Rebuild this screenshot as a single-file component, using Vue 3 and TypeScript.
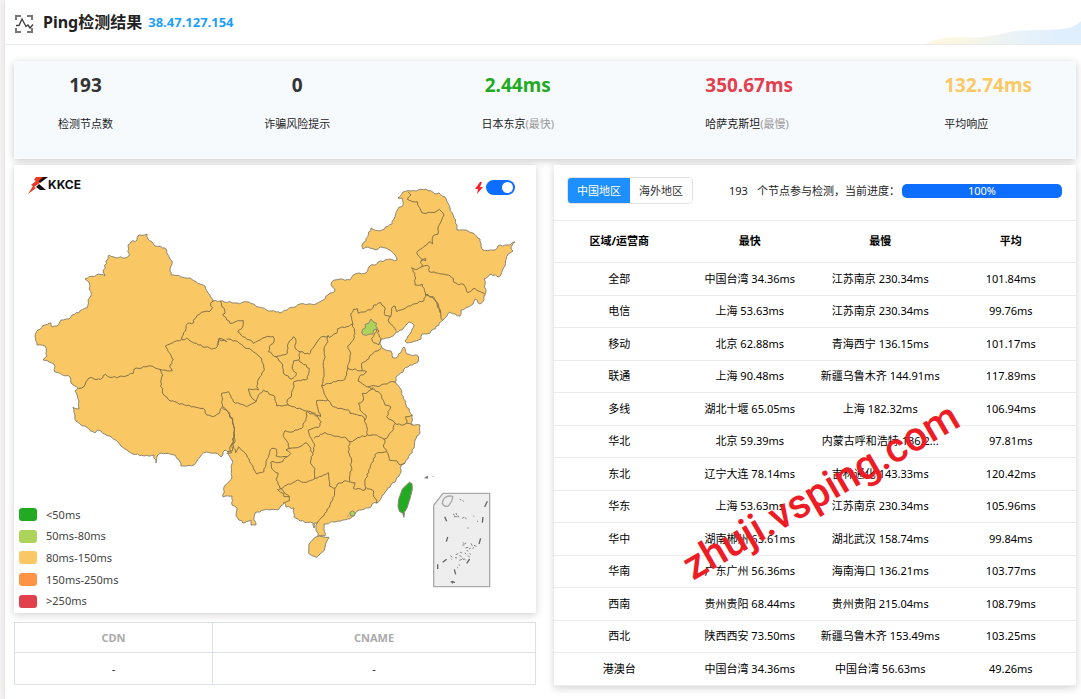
<script setup lang="ts">
import { ref } from 'vue'

type Tone = 'dark' | 'good' | 'bad' | 'fair'
interface Stat { value: string; label: string; note?: string; tone: Tone; start?: boolean }

const stats: Stat[] = [
  { value: '193', label: '检测节点数', tone: 'dark' },
  { value: '0', label: '诈骗风险提示', tone: 'dark' },
  { value: '2.44ms', label: '日本东京', note: '(最快)', tone: 'good' },
  { value: '350.67ms', label: '哈萨克斯坦', note: '(最慢)', tone: 'bad', start: true },
  { value: '132.74ms', label: '平均响应', tone: 'fair', start: true },
]

const legend = [
  { text: '<50ms', cls: 'l1' },
  { text: '50ms-80ms', cls: 'l2' },
  { text: '80ms-150ms', cls: 'l3' },
  { text: '150ms-250ms', cls: 'l4' },
  { text: '>250ms', cls: 'l5' },
]

const rows: string[][] = [
  ['全部', '中国台湾 34.36ms', '江苏南京 230.34ms', '101.84ms'],
  ['电信', '上海 53.63ms', '江苏南京 230.34ms', '99.76ms'],
  ['移动', '北京 62.88ms', '青海西宁 136.15ms', '101.17ms'],
  ['联通', '上海 90.48ms', '新疆乌鲁木齐 144.91ms', '117.89ms'],
  ['多线', '湖北十堰 65.05ms', '上海 182.32ms', '106.94ms'],
  ['华北', '北京 59.39ms', '内蒙古呼和浩特 136.2...', '97.81ms'],
  ['东北', '辽宁大连 78.14ms', '吉林通化 143.33ms', '120.42ms'],
  ['华东', '上海 53.63ms', '江苏南京 230.34ms', '105.96ms'],
  ['华中', '湖南郴州 63.61ms', '湖北武汉 158.74ms', '99.84ms'],
  ['华南', '广东广州 56.36ms', '海南海口 136.21ms', '103.77ms'],
  ['西南', '贵州贵阳 68.44ms', '贵州贵阳 215.04ms', '108.79ms'],
  ['西北', '陕西西安 73.50ms', '新疆乌鲁木齐 153.49ms', '103.25ms'],
  ['港澳台', '中国台湾 34.36ms', '中国台湾 56.63ms', '49.26ms'],
]

const region = ref<'cn' | 'abroad'>('cn')
const fast = ref(true)

/* Turns a coarse point list into a line with small coast-like wiggles. */
function rough(src: string, amount: number, closed = false): string {
  const n = src.trim().split(/[\s,]+/).map(Number)
  const pts: [number, number][] = []
  for (let i = 0; i < n.length; i += 2) pts.push([n[i], n[i + 1]])
  if (closed) pts.push(pts[0])
  const out: string[] = [`${pts[0][0]} ${pts[0][1]}`]
  for (let i = 1; i < pts.length; i++) {
    const [ax, ay] = pts[i - 1]
    const [bx, by] = pts[i]
    const dx = bx - ax
    const dy = by - ay
    const len = Math.hypot(dx, dy)
    const parts = Math.max(1, Math.round(len / (amount * 2.4)))
    for (let k = 1; k < parts; k++) {
      const h = Math.sin((ax + k * 7) * 12.9 + (by + k * 3) * 78.2) * 43758.5
      const off = (h - Math.floor(h) - 0.5) * amount * 1.8
      const t = k / parts
      out.push(`${(ax + dx * t - (dy / len) * off).toFixed(1)} ${(ay + dy * t + (dx / len) * off).toFixed(1)}`)
    }
    out.push(`${bx} ${by}`)
  }
  return 'M' + out.join('L') + (closed ? 'Z' : '')
}

const mainland = rough(`35 336 38 330 45 325 51 323 52 327 57 326 61 320 69 319 72 315 87 308 88 300 91 296 89 282 85 279 99 274 105 276 103 272
109 255 114 257 125 258 129 256 128 245 131 242 137 240 139 235 147 234 148 239 155 246 165 248 168 255 172 261 170 271 171 275 190 278 200 284 205 286
208 293 213 301 220 301 237 303 249 302 258 307 271 311 276 312 280 313 300 304 316 304 323 300 328 295 335 291 331 285 334 280 340 279 350 280 355 274 366 273
370 266 385 260 397 260 395 255 386 248 380 247 376 250 368 247 363 249 362 245 366 241 371 228 380 231 392 224 394 219 398 209 403 205 402 198 398 198
403 192 411 191 426 189 435 194 439 193 445 197 450 208 453 215 457 225 457 230 465 230 473 233 480 239 481 246 483 250 495 250 498 246 507 245 515 242
511 247 513 251 508 254 505 266 499 277 491 274 484 279 486 292 484 300 480 304 475 299 473 304 461 310 460 316 450 312 443 320 430 333 422 334 421 339
407 343 405 341 408 336 414 325 409 322 402 330 396 332 393 336 381 339 380 344 382 348 391 351 393 358 396 358 404 347 407 354 418 356 418 362 410 365 397 376 395 382
400 388 406 405 412 415 412 425 420 425 420 433 415 440 414 448 405 463 400 467 401 472 396 480 385 492 377 503 372 504 369 508 359 510 352 517 343 520
335 522 324 524 325 536 318 536 316 528 317 523 314 523 314 528 313 523 300 521 294 517 294 508 286 507 284 502 278 510 264 510 255 513 254 517 256 525 251 525
251 520 243 523 236 516 237 508 232 505 232 496 223 497 224 487 232 477 232 460 228 452 225 450 221 457 215 453 206 452 200 457 194 465 181 466 179 460
175 455 161 453 157 456 156 463 154 455 144 456 133 454 125 449 118 442 101 431 98 430 95 433 76 421 75 415 73 407 79 409 79 401 75 391 78 388 72 384
70 377 55 372 54 364 43 360 47 356 45 346 37 345`, 1, true)

/* Province borders, grouped by map sheet; every sheet is drawn at a third of its grid. */
const sheets = [
  {
    at: 'translate(10 165) scale(.33333)',
    lines: ['611 408 602 415 607 428 598 440 583 440 568 448 553 462 551 473 533 475 526 498 515 523 466 543'],
  },
  {
    at: 'translate(10 320) scale(.33333)',
    lines: [
      '515 59 530 55 545 65 565 75 605 87 622 80 627 55 650 65',
      '466 78 475 95 490 120 480 135 487 152 450 148',
      '450 148 458 165 452 185 458 220 480 243 530 257 580 265 590 285 607 290 628 280 635 262',
      '205 205 222 200 237 174 272 178 287 163 300 172 340 170 370 160 372 148 400 140 430 140 450 148',
      '635 262 655 275 668 305 675 365 660 380 665 398 650 400',
    ],
  },
  {
    at: 'translate(200 280) scale(.33333)',
    lines: [
      '62 64 75 100 68 103 90 130 113 122 130 122 127 143 113 156 135 172 150 180 160 190 180 180 195 172 220 170 222 185 208 200 205 215 228 230',
      '228 230 262 220 265 190 280 170 288 180 285 205 302 215 296 240 280 243 277 265 290 280 275 297 252 282 248 255 228 230',
      '296 240 328 265 322 297 282 305 275 345 262 360 265 375',
      '302 215 328 223 345 195 362 172 385 168 388 172 410 160 412 147 440 140 458 132 452 105 460 88 472 86 475 100 518 85 522 75 542 68 553 80 556 107 572 110 575 85 585 78 590 95 625 78 672 62 677 43 700 55 712 75 722 100',
      '385 165 380 190 372 210 376 230 370 260 372 290 365 318',
      '365 318 400 305 435 298 443 265',
      '458 132 465 160 460 180 443 198 452 220 443 265 487 272 485 250 500 240 520 220 543 205',
      '487 272 500 275 478 290 474 303 500 320 540 318 575 305 588 308',
      '572 110 565 122 580 140 588 152',
      '530 148 537 152 533 160 543 175 535 195 518 185 515 175 523 162 530 148',
      '80 178 105 182 130 198 160 215 185 235 193 268 180 290 170 320 175 330 145 327 150 345 168 365 175 345 190 330 225 350 230 378 262 375 320 393 350 410',
      '55 195 57 178 80 185',
      '168 365 140 380 120 372 100 365 85 335 65 340 68 380',
      '365 318 383 360 350 362 352 380 362 410 345 400 322 393',
      '383 360 400 380 445 390 450 400 490 410 500 440 502 465',
      '520 322 500 340 487 340 490 360 475 370 480 390 498 405 495 420',
      '505 318 540 340 555 375 572 380 560 410 585 430 575 455 560 475 550 478',
      '585 430 610 435 620 430 637 435',
      '620 430 617 410 638 405',
    ],
  },
  {
    at: 'translate(200 400) scale(.33333)',
    lines: [
      '68 20 98 55 104 105 98 130 107 158 115 140 140 165 152 190 170 222 192 215 198 185 215 145 230 148 228 168 262 170 248 185 212 187 215 205 235 220 228 240 240 265 268 290 268 302 253 308',
      '104 105 96 130 98 152 83 155',
      '235 270 285 245 293 240 310 247 345 235',
      '262 170 272 160 258 150 270 145 300 140 318 128 338 158 332 190 345 205 345 235',
      '320 35 318 55 305 85 280 95 255 92 250 110 265 130 268 145',
      '350 45 364 65 355 82 325 90 330 110 342 130 340 157',
      '342 115 375 97 395 105 440 115 450 125 480 112 502 105 530 105 550 115',
      '550 115 555 125 550 135 560 155 530 160 520 175 510 205 497 235 497 262 518 270 530 310',
      '450 125 445 155 455 180 450 245',
      '345 235 385 218 388 258 405 265 412 252 440 243 465 248 460 265 495 270 497 262',
      '560 155 570 182 590 182 600 195 615 190',
      '405 265 398 300 380 335 352 370',
      '232 268 250 280 252 290 268 290',
    ],
  },
  {
    at: 'translate(340 170) scale(.33333)',
    lines: [
      '205 66 213 75 202 88 225 96 232 95 245 128 285 127 298 118 312 135 295 170 293 193 280 197 278 222 270 215 230 248 245 268 257 265 257 272 243 272 247 290 265 287 268 305 295 310 325 315 340 325 340 335 355 345 370 342 382 367 405 355 437 375',
      '247 290 232 298 215 293 225 310 225 345 247 343 257 375',
      '257 375 280 380 295 405 303 445 307 450',
    ],
  },
].map(s => ({ at: s.at, d: s.lines.map(l => rough(l, 3)).join('') }))
</script>

<template>
  <main class="page">
    <header class="head">
      <svg class="head-icon" viewBox="0 0 20 20" aria-hidden="true">
        <path d="M2 6V2h5M13 2h5v4M18 14v4h-5M7 18H2v-4" />
        <path class="wave" d="M2 11.500H5L8 5L12 12.500L14 11L16 14L19 10.500" />
      </svg>
      <h1>Ping检测结果</h1>
      <a class="ip" href="#">38.47.127.154</a>
      <svg class="hills" viewBox="0 0 156 26" preserveAspectRatio="none" aria-hidden="true">
        <defs>
          <linearGradient id="hill" x1="0" x2="1" y1="0" y2="0">
            <stop offset="0" stop-color="#fff6e0" />
            <stop offset=".22" stop-color="#faf6e2" />
            <stop offset=".6" stop-color="#e9f2f8" />
            <stop offset=".85" stop-color="#e0effe" />
          </linearGradient>
        </defs>
        <path fill="url(#hill)" d="M0 26C12 20 24 18 36 19C52 20 66 18 80 14C94 10 112 12 134 10C144 9 150 7 156 1V26Z" />
      </svg>
    </header>

    <div class="body">
      <section class="stats">
        <div v-for="s in stats" :key="s.label" class="stat" :class="{ start: s.start }">
          <strong :class="s.tone">{{ s.value }}</strong>
          <p>{{ s.label }}<span v-if="s.note">{{ s.note }}</span></p>
        </div>
      </section>

      <div class="cols">
        <div class="left">
          <section class="card map-card">
            <svg class="map" viewBox="14 165 522 448" role="img" aria-label="中国地区">
              <path class="land" :d="mainland" />
              <g v-for="s in sheets" :key="s.at" :transform="s.at">
                <path class="border" :d="s.d" />
              </g>
              <g transform="translate(200 280) scale(.33333)">
                <path class="land lime" d="M513 117L519 125L530 130L527 138L533 145L520 151L519 162L503 163L500 167L488 163L485 156L489 147L497 143L495 133L506 130Z" />
              </g>
              <g transform="translate(200 400) scale(.33333)">
                <path class="land" d="M327 432L345 412L358 408L376 412L387 412L378 428L373 451L360 462L350 472L334 466L326 460Z" />
                <path class="land green" d="M628 247L636 251L637 268L630 296L621 324L613 337L612 352L608 340L598 334L594 318L596 298L607 267Z" />
                <path class="land lime" d="M449 338L457 333L466 338L463 347L452 348Z" />
                <path class="reef" d="M674 234L683 228V235ZM697 229h4M446 344l-4 6" />
              </g>
              <g transform="translate(400 440) scale(.33333)">
                <path class="inset" d="M129 160H269V440H101V196Z" />
                <path class="isle" d="M136 172Q146 166 158 169Q158 184 145 198Q133 202 127 190Q127 180 136 172Z" />
                <path class="dash" d="M262 184L254 201M134 230L140 244M249 231L247 248M143 291L139 305M242 295L237 312M113 373V387M209 357L200 370M163 388L167 403M128 367L140 358M152 425L165 427M156 430L160 423" />
                <path class="specks" d="M179 178l5 2M188 181l3 4M159 222l6 4M168 219l2 6M162 230l10 0M174 226l2 6M186 235l6-3M194 232l6 5M220 227l2 3M231 244h3M202 264h4M189 307l5 6M196 312l2-4M187 315h6M213 310l4 8M222 316l8 3M196 324l9-2M207 327l5-3M217 325l5-2M200 332l5 1M180 336l6 3M194 338l5 5M208 341l5 2M167 344l8-3M178 347l6 2M186 353l6 7M192 356l5 4M178 361l8-3M151 347l6 5M153 356l3 3M203 347l6 4M165 353l6 1M177 373l2 4M171 382l3 2" />
              </g>
            </svg>
            <div class="logo">
              <svg viewBox="0 0 20 17" aria-hidden="true">
                <path fill="#111" d="M13 0H20L12 6L10 5ZM11 7L18 13H12L8 10Z" />
                <path fill="#ee3524" d="M8 0H15L10 5H13L6 10L8 11L0 17L5 9L3 8L8 4L6 3Z" />
              </svg>
              <b>KKCE</b>
            </div>
            <label class="speed">
              <svg viewBox="0 0 8 12" aria-hidden="true"><path d="M5 0L0 7H3L2 12L8 5H5L7 0Z" /></svg>
              <input v-model="fast" type="checkbox" role="switch" aria-label="快速" />
            </label>
            <ul class="legend">
              <li v-for="l in legend" :key="l.cls"><i :class="l.cls"></i>{{ l.text }}</li>
            </ul>
          </section>

          <table class="cname">
            <thead><tr><th>CDN</th><th>CNAME</th></tr></thead>
            <tbody><tr><td>-</td><td>-</td></tr></tbody>
          </table>
        </div>

        <section class="card results">
          <div class="bar">
            <div class="tabs">
              <button type="button" :class="{ on: region === 'cn' }" @click="region = 'cn'">中国地区</button>
              <button type="button" :class="{ on: region === 'abroad' }" @click="region = 'abroad'">海外地区</button>
            </div>
            <p class="count"><span>193</span>个节点参与检测，当前进度：</p>
            <div class="progress" role="progressbar" aria-valuenow="100" aria-valuemin="0" aria-valuemax="100">100%</div>
          </div>
          <table class="grid">
            <thead>
              <tr><th>区域/运营商</th><th>最快</th><th>最慢</th><th>平均</th></tr>
            </thead>
            <tbody>
              <tr v-for="r in rows" :key="r[0]"><td v-for="(c, i) in r" :key="i">{{ c }}</td></tr>
            </tbody>
          </table>
          <span class="watermark">zhuji.vsping.com</span>
        </section>
      </div>
    </div>
  </main>
</template>

<style>
body {
  background: #f8f5f6;
}
</style>

<style scoped>
* {
  box-sizing: border-box;
}
.page {
  margin-left: 5px;
  min-height: 100vh;
  background: #fff;
  box-shadow: 0 0 8px rgba(0, 0, 0, 0.12);
  font: 11px/16px 'Noto Sans', 'Noto Sans CJK SC', sans-serif;
  color: #222;
}
p, h1, ul {
  margin: 0;
  padding: 0;
}
.head {
  position: relative;
  display: flex;
  align-items: center;
  height: 45px;
  padding-left: 9px;
  border-bottom: 1px solid #ebebeb;
}
.head-icon {
  width: 20px;
  height: 20px;
  margin-top: 4px;
  fill: none;
  stroke: #777;
  stroke-width: 2;
}
.head-icon .wave {
  stroke-width: 1.4;
  stroke: #444;
}
h1 {
  margin-left: 9px;
  font-size: 16px;
  line-height: 24px;
  font-weight: 700;
}
.ip {
  margin-left: 6px;
  font-size: 13px;
  font-weight: 700;
  color: #1e9fff;
  text-decoration: none;
}
.hills {
  position: absolute;
  right: 0;
  bottom: 0;
  width: 156px;
  height: 24px;
}
.body {
  padding: 16px 5px 14px 9px;
}
.stats {
  display: flex;
  justify-content: space-between;
  height: 98px;
  padding: 11px 44px 0;
  background: #f6fafd;
  box-shadow: 0 2px 8px rgba(0, 0, 0, 0.2);
}
.stat {
  text-align: center;
}
.stat.start {
  text-align: left;
}
.stat strong {
  display: block;
  font-size: 19px;
  line-height: 26px;
}
.stat p {
  margin-top: 18px;
}
.stat p span {
  color: #999;
}
.dark { color: #333; }
.good { color: #22ab22; }
.bad { color: #e3404e; }
.fair { color: #fac864; }
.cols {
  display: grid;
  grid-template-columns: 1fr 1fr;
  gap: 18px;
  margin-top: 6px;
}
.card {
  position: relative;
  background: #fff;
  box-shadow: 0 2px 8px rgba(0, 0, 0, 0.18);
}
.map {
  display: block;
  width: 100%;
  height: auto;
}
.land {
  fill: #f9c763;
  stroke: #8d8672;
  stroke-width: 1;
  vector-effect: non-scaling-stroke;
  stroke-linejoin: round;
}
.green { fill: #22ab22; }
.lime { fill: #add45a; }
.border {
  fill: none;
  stroke: #847248;
  stroke-width: 1;
  vector-effect: non-scaling-stroke;
  stroke-linejoin: round;
}
.reef {
  fill: #777;
  stroke: #777;
  stroke-width: 2;
}
.inset {
  fill: #eee;
  stroke: #aaa;
  stroke-width: 4;
}
.isle {
  fill: none;
  stroke: #aaa;
  stroke-width: 4;
}
.dash {
  stroke: #666;
  stroke-width: 4;
}
.specks {
  stroke: #888;
  stroke-width: 3;
}
.logo {
  position: absolute;
  top: 12px;
  left: 14px;
  display: flex;
  align-items: flex-start;
  color: #111;
}
.logo svg {
  width: 20px;
  height: 17px;
}
.logo b {
  font: 700 12px/15px Inter, sans-serif;
}
.speed {
  position: absolute;
  top: 15px;
  right: 21px;
  display: flex;
  align-items: center;
  gap: 3px;
}
.speed svg {
  width: 8px;
  height: 12px;
  fill: #f5222d;
}
.speed input {
  appearance: none;
  width: 29px;
  height: 15px;
  margin: 0;
  padding: 2px;
  border-radius: 8px;
  background: #bbb;
}
.speed input::before {
  content: '';
  display: block;
  width: 11px;
  height: 11px;
  border-radius: 50%;
  background: #fff;
}
.speed input:checked {
  background: #0d6efd;
}
.speed input:checked::before {
  margin-left: auto;
}
.legend {
  position: absolute;
  left: 5px;
  bottom: 1px;
  display: grid;
  grid-template-rows: repeat(5, 1fr);
  height: 108px;
  list-style: none;
  color: #444;
}
.legend li {
  display: flex;
  align-items: center;
  gap: 9px;
}
.legend i {
  width: 18px;
  height: 13px;
  border-radius: 3px;
}
.l1 { background: #22ab22; }
.l2 { background: #add45a; }
.l3 { background: #f9c763; }
.l4 { background: #ff9544; }
.l5 { background: #e3404e; }
.cname {
  width: 100%;
  margin-top: 9px;
  border-collapse: collapse;
  table-layout: fixed;
  text-align: center;
}
.cname th, .cname td {
  height: 30px;
  padding: 0;
  border: 1px solid #dcdfe8;
}
.cname td {
  height: 32px;
}
.cname th {
  color: #aaa;
  font-weight: 700;
}
.cname th:first-child {
  width: 38%;
}
.bar {
  display: flex;
  align-items: center;
  height: 55px;
  padding: 0 14px 4px 13px;
}
.tabs {
  display: flex;
  height: 27px;
  border: 1px solid #e2e2e2;
  border-radius: 4px;
  overflow: hidden;
}
.tabs button {
  width: 62px;
  padding: 0;
  border: 0;
  background: #fff;
  color: #333;
  font: inherit;
}
.tabs button.on {
  background: #1e8fff;
  color: #fff;
}
.count {
  margin-left: 36px;
  white-space: nowrap;
}
.count span {
  margin-right: 9px;
}
.progress {
  flex: 1;
  max-width: 160px;
  height: 14px;
  margin-left: auto;
  border-radius: 5px;
  background: #0d6efd;
  color: #fff;
  text-align: center;
  line-height: 13px;
}
.grid {
  width: 100%;
  border-collapse: collapse;
  table-layout: fixed;
  text-align: center;
  color: #000;
}
.grid th, .grid td {
  height: 33px;
  padding: 0 4px 1px;
  border-top: 1px solid #ececec;
  border-bottom: 1px solid #ececec;
  white-space: nowrap;
}
.grid tr:nth-child(even) td {
  height: 32px;
}
.grid th {
  height: 42px;
  padding-bottom: 2px;
  font-weight: 700;
}
.watermark {
  position: absolute;
  left: 142px;
  bottom: 100px;
  transform: rotate(-30deg);
  transform-origin: left bottom;
  font: 500 41px/40px Roboto, sans-serif;
  color: #ee1c24;
  pointer-events: none;
}
</style>
